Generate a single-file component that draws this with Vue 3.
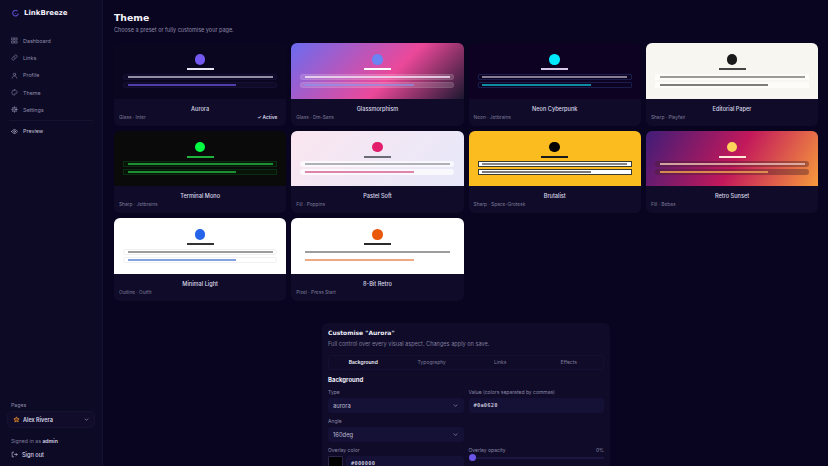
<template>
  <div class="layout">
    <aside class="sidebar">
      <div class="brand">
        <svg class="brand-icon" viewBox="0 0 10 10" width="7" height="7">
          <path d="M7.8 1.6A4 4 0 1 0 9 5" fill="none" stroke="#5a4fd0" stroke-width="1.5" />
          <circle cx="5" cy="5" r="1.1" fill="#2f2b78" />
        </svg>
        <span>LinkBreeze</span>
      </div>
      <nav class="nav">
        <a v-for="item in navItems" :key="item.label" class="nav-item">
          <svg viewBox="0 0 24 24" width="7" height="7" class="nav-icon" v-html="item.icon"></svg>
          <span>{{ item.label }}</span>
        </a>
      </nav>
      <div class="nav-divider"></div>
      <a class="nav-item preview">
        <svg viewBox="0 0 24 24" width="7" height="7" class="nav-icon">
          <path d="M2 12s4-7 10-7 10 7 10 7-4 7-10 7-10-7-10-7z" />
          <circle cx="12" cy="12" r="3" />
        </svg>
        <span>Preview</span>
      </a>
      <div class="side-bottom">
        <div class="pages-label">Pages</div>
        <div class="page-select">
          <svg viewBox="0 0 24 24" width="7" height="7" class="star">
            <path d="M12 3l2.8 5.8 6.2.9-4.5 4.4 1.1 6.3L12 17.4l-5.6 3 1.1-6.3L3 9.7l6.2-.9z" />
          </svg>
          <span class="page-name">Alex Rivera</span>
          <svg viewBox="0 0 24 24" width="7" height="7" class="chev"><path d="M6 9l6 6 6-6" /></svg>
        </div>
        <div class="signed">Signed in as <b>admin</b></div>
        <div class="signout">
          <svg viewBox="0 0 24 24" width="7" height="7" class="nav-icon">
            <path d="M9 4H4v16h5M12 12h9M17 8l4 4-4 4" />
          </svg>
          <span>Sign out</span>
        </div>
      </div>
    </aside>

    <main class="main">
      <h1 class="title">Theme</h1>
      <p class="subtitle">Choose a preset or fully customise your page.</p>

      <section class="grid">
        <article v-for="t in themes" :key="t.name" class="card">
          <div class="preview-box" :style="{ background: t.bg }">
            <span class="dot" :style="{ background: t.accent }"></span>
            <span class="name-bar" :style="{ background: t.text }"></span>
            <div class="link-row" :style="{ background: t.row, borderColor: t.rowBorder, borderRadius: t.radius }">
              <span class="bar" :style="{ background: t.bar1 }"></span>
            </div>
            <div class="link-row" :style="{ background: t.row, borderColor: t.rowBorder, borderRadius: t.radius }">
              <span class="bar short" :style="{ background: t.bar2 }"></span>
            </div>
          </div>
          <div class="card-body">
            <div class="card-name">{{ t.name }}</div>
            <div class="card-meta">
              <span>{{ t.meta }}</span>
              <span v-if="t.active" class="active">✓ Active</span>
            </div>
          </div>
        </article>
      </section>

      <section class="panel">
        <h2 class="panel-title">Customise "Aurora"</h2>
        <p class="panel-sub">Full control over every visual aspect. Changes apply on save.</p>
        <div class="tabs">
          <span v-for="(tab, i) in tabs" :key="tab" class="tab" :class="{ on: i === 0 }">{{ tab }}</span>
        </div>
        <h3 class="panel-head">Background</h3>
        <div class="fields">
          <div class="field">
            <label>Type</label>
            <div class="input">aurora<svg viewBox="0 0 24 24" width="7" height="7" class="chev"><path d="M6 9l6 6 6-6" /></svg></div>
          </div>
          <div class="field">
            <label>Value (colors separated by commas)</label>
            <div class="input mono">#0a0620</div>
          </div>
          <div class="field">
            <label>Angle</label>
            <div class="input">160deg<svg viewBox="0 0 24 24" width="7" height="7" class="chev"><path d="M6 9l6 6 6-6" /></svg></div>
          </div>
          <div class="field"></div>
          <div class="field">
            <label>Overlay color</label>
            <div class="color-row">
              <span class="swatch"></span>
              <div class="input mono grow">#000000</div>
            </div>
          </div>
          <div class="field">
            <label class="spread"><span>Overlay opacity</span><span>0%</span></label>
            <div class="slider"><span class="thumb"></span></div>
          </div>
        </div>
      </section>
    </main>
  </div>
</template>

<script setup>
const navItems = [
  { label: 'Dashboard', icon: '<rect x="3" y="3" width="7" height="7"/><rect x="14" y="3" width="7" height="7"/><rect x="3" y="14" width="7" height="7"/><rect x="14" y="14" width="7" height="7"/>' },
  { label: 'Links', icon: '<path d="M10 14a5 5 0 0 0 7 0l3-3a5 5 0 0 0-7-7l-1 1"/><path d="M14 10a5 5 0 0 0-7 0l-3 3a5 5 0 0 0 7 7l1-1"/>' },
  { label: 'Profile', icon: '<circle cx="12" cy="8" r="4"/><path d="M4 21c0-4 3-7 8-7s8 3 8 7"/>' },
  { label: 'Theme', icon: '<path d="M12 3a9 9 0 1 0 0 18c2 0 2-2 1-3s0-3 2-3h3a3 3 0 0 0 3-3c0-5-4-9-9-9z"/>' },
  { label: 'Settings', icon: '<circle cx="12" cy="12" r="3"/><circle cx="12" cy="12" r="7.5"/><path d="M12 2v3M12 19v3M2 12h3M19 12h3M5 5l2 2M17 17l2 2M19 5l-2 2M7 17l-2 2"/>' },
]

const tabs = ['Background', 'Typography', 'Links', 'Effects']

const themes = [
  { name: 'Aurora', meta: 'Glass · Inter', active: true, bg: '#0a0620', accent: '#7358f0', text: '#e8e6f4', row: '#0e0a28', rowBorder: '#131033', radius: '1.5px', bar1: '#a9a6b8', bar2: '#5a48c0' },
  { name: 'Glassmorphism', meta: 'Glass · Dm-Sans', bg: 'linear-gradient(135deg, #6a6cf0 0%, #ec4899 58%, #1b1830 100%)', accent: '#6a84f4', text: '#ffffff', row: 'rgba(255,255,255,.16)', rowBorder: 'rgba(255,255,255,.08)', radius: '3px', bar1: '#eedcf0', bar2: 'rgba(130,150,240,.75)' },
  { name: 'Neon Cyberpunk', meta: 'Neon · Jetbrains', bg: '#0d0221', accent: '#00eaff', text: '#d6c8e6', row: '#0d0221', rowBorder: '#1a1e4c', radius: '1px', bar1: '#9c93a8', bar2: '#0fa3b8' },
  { name: 'Editorial Paper', meta: 'Sharp · Playfair', bg: '#f8f6f1', accent: '#1a1a1a', text: '#444444', row: '#fdfcf9', rowBorder: 'transparent', radius: '0', bar1: '#8a8a86', bar2: '#666664' },
  { name: 'Terminal Mono', meta: 'Sharp · Jetbrains', bg: '#0a0a0a', accent: '#00ff41', text: '#1fb23d', row: '#071407', rowBorder: '#0a2c10', radius: '0', bar1: '#22a63c', bar2: '#22a63c' },
  { name: 'Pastel Soft', meta: 'Fill · Poppins', bg: 'linear-gradient(135deg, #fbe6f0 0%, #e6e8fa 100%)', accent: '#e11d6c', text: '#6a6a78', row: 'rgba(255,255,255,.7)', rowBorder: 'transparent', radius: '3px', bar1: '#a3a5ab', bar2: '#d9709c' },
  { name: 'Brutalist', meta: 'Sharp · Space-Grotesk', bg: '#fbbc1f', accent: '#000000', text: '#1a1a1a', row: '#ffffff', rowBorder: '#3a3a30', radius: '0', bar1: '#707070', bar2: '#606060' },
  { name: 'Retro Sunset', meta: 'Fill · Bebas', bg: 'linear-gradient(120deg, #3f1d78 0%, #c2185b 52%, #f79b3c 100%)', accent: '#ffd35c', text: '#ffe8d8', row: 'rgba(70,30,40,.4)', rowBorder: 'transparent', radius: '3px', bar1: '#e8b8b0', bar2: '#eb9a50' },
  { name: 'Minimal Light', meta: 'Outline · Outfit', bg: '#ffffff', accent: '#2563eb', text: '#333333', row: '#ffffff', rowBorder: '#f0f0f0', radius: '3px', bar1: '#8c8c8c', bar2: '#6f90dc' },
  { name: '8-Bit Retro', meta: 'Pixel · Press Start', bg: '#ffffff', accent: '#ea580c', text: '#2a2a2a', row: '#ffffff', rowBorder: 'transparent', radius: '0', bar1: '#8c8c8c', bar2: '#ec9a6c' },
]
</script>

<style>
html, body {
  margin: 0;
  height: 466px;
  overflow: hidden;
  background: #090520;
}
</style>

<style scoped>
.layout {
  display: flex;
  width: 828px;
  height: 466px;
  overflow: hidden;
  font-family: Inter, "Liberation Sans", sans-serif;
  color: #e8e6f4;
  background: #090520;
}

.sidebar {
  flex: 0 0 103px;
  box-sizing: border-box;
  display: flex;
  flex-direction: column;
  padding: 0 7px;
  background: #0d0a26;
  border-right: 1px solid #15112f;
}

.brand {
  display: flex;
  align-items: center;
  gap: 5px;
  height: 26px;
  padding-left: 5px;
  font-family: "DejaVu Sans", sans-serif;
  font-size: 7px;
  font-weight: 700;
  color: #f2f0fa;
}

.nav {
  display: flex;
  flex-direction: column;
  margin-top: 6px;
}

.nav-item {
  display: flex;
  align-items: center;
  gap: 5px;
  height: 17.3px;
  padding-left: 4px;
  font-size: 5.4px;
  color: #8d8aa8;
}

.nav-icon {
  flex-shrink: 0;
  fill: none;
  stroke: currentColor;
  stroke-width: 2;
  stroke-linecap: round;
  stroke-linejoin: round;
}

.nav-divider {
  height: 1px;
  margin: 2px 2px 1px;
  background: #16122f;
}

.preview {
  color: #c4c2d8;
}

.side-bottom {
  margin-top: auto;
  padding-bottom: 8px;
}

.pages-label {
  font-size: 5.2px;
  color: #8d8aa8;
  margin: 0 0 3px 4px;
}

.page-select {
  display: flex;
  align-items: center;
  gap: 3px;
  box-sizing: border-box;
  height: 17px;
  padding: 0 4px 0 5px;
  border: 1px solid #16122f;
  border-radius: 5px;
  background: #100c2a;
}

.star {
  fill: #5a3320;
  stroke: #d9822b;
  stroke-width: 3;
}

.page-name {
  flex: 1;
  font-size: 5.5px;
  font-weight: 600;
  color: #d8d6e8;
}

.chev {
  fill: none;
  stroke: #8d8aa8;
  stroke-width: 2.5;
}

.signed {
  margin: 10px 0 0 4px;
  font-size: 5.2px;
  color: #7f7c9a;
}

.signed b {
  color: #d8d6e8;
  font-weight: 600;
}

.signout {
  display: flex;
  align-items: center;
  gap: 4px;
  margin: 7px 0 0 4px;
  font-size: 5.6px;
  font-weight: 500;
  color: #d8d6e8;
}

.main {
  flex: 1;
  min-width: 0;
  padding: 0 10px 0 11px;
}

.title {
  margin: 11px 0 0;
  font-family: "DejaVu Sans", sans-serif;
  font-size: 9.3px;
  line-height: 13px;
  font-weight: 700;
  color: #f5f4fb;
}

.subtitle {
  margin: 2px 0 0;
  font-size: 5.5px;
  line-height: 8px;
  color: #8d8aa8;
}

.grid {
  display: grid;
  grid-template-columns: repeat(4, 172.3px);
  grid-auto-rows: 82.5px;
  column-gap: 5px;
  row-gap: 5px;
  margin-top: 9px;
}

.card {
  display: flex;
  flex-direction: column;
  border-radius: 6px;
  overflow: hidden;
  background: #0f0b29;
}

.preview-box {
  flex: 0 0 55.5px;
  display: flex;
  flex-direction: column;
  align-items: center;
  box-sizing: border-box;
  padding-top: 11px;
}

.dot {
  width: 10.5px;
  height: 10.5px;
  border-radius: 50%;
}

.name-bar {
  width: 27px;
  height: 2px;
  margin: 3.5px 0 3.5px;
}

.link-row {
  box-sizing: border-box;
  width: 154px;
  height: 6px;
  margin-bottom: 2px;
  padding: 0 3.5px;
  display: flex;
  align-items: center;
  border: 0.5px solid transparent;
}

.bar {
  display: block;
  width: 100%;
  height: 2px;
  opacity: 0.85;
}

.bar.short {
  width: 75%;
}

.card-body {
  flex: 1;
  padding: 6px 5px 0;
}

.card-name {
  text-align: center;
  font-size: 5.6px;
  line-height: 8px;
  font-weight: 500;
  color: #dcdaea;
}

.card-meta {
  display: flex;
  justify-content: space-between;
  margin-top: 1px;
  font-size: 4.8px;
  line-height: 7px;
  color: #7f7c9a;
}

.active {
  margin-right: 4px;
  color: #dcdaea;
  font-weight: 600;
}

.panel {
  box-sizing: border-box;
  width: 288px;
  height: 160px;
  margin: 22px 0 0 208px;
  padding: 6px 6px;
  background: #0f0b29;
  border-radius: 6px;
}

.panel-title {
  margin: 0;
  font-family: "DejaVu Sans", sans-serif;
  font-size: 6px;
  line-height: 8px;
  font-weight: 700;
  color: #ecebf6;
}

.panel-sub {
  margin: 3px 0 0;
  font-size: 5.6px;
  line-height: 8px;
  color: #7f7c9a;
}

.tabs {
  display: grid;
  grid-template-columns: repeat(4, 1fr);
  margin-top: 7px;
  height: 15px;
  align-items: center;
  border: 1px solid #141033;
  border-radius: 3px;
  box-sizing: border-box;
}

.tab {
  text-align: center;
  font-size: 5px;
  color: #7f7c9a;
}

.tab.on {
  color: #ecebf6;
  font-weight: 600;
}

.panel-head {
  margin: 6px 0 0;
  font-size: 6px;
  line-height: 8px;
  font-weight: 700;
  color: #ecebf6;
}

.fields {
  display: grid;
  grid-template-columns: 1fr 1fr;
  column-gap: 5px;
  row-gap: 4px;
  margin-top: 5px;
}

.field {
  min-height: 25px;
}

.field label {
  display: block;
  font-size: 5px;
  line-height: 7px;
  margin-bottom: 2px;
  color: #8d8aa8;
}

.spread {
  display: flex !important;
  justify-content: space-between;
}

.input {
  display: flex;
  align-items: center;
  justify-content: space-between;
  box-sizing: border-box;
  height: 15px;
  padding: 0 5px;
  font-size: 5.8px;
  color: #bfbdd2;
  background: #151136;
  border-radius: 3px;
}

.mono {
  font-family: "DejaVu Sans Mono", monospace;
  font-size: 5.4px;
  font-weight: 700;
  letter-spacing: 0.2px;
}

.color-row {
  display: flex;
  gap: 3px;
}

.swatch {
  flex: 0 0 13px;
  height: 13px;
  border: 1px solid #2a2650;
  background: #000;
  border-radius: 1px;
}

.grow {
  flex: 1;
}

.slider {
  position: relative;
  height: 2px;
  margin-top: 3px;
  background: #1a1640;
  border-radius: 1px;
}

.thumb {
  position: absolute;
  left: 0;
  top: -2.5px;
  width: 7px;
  height: 7px;
  border-radius: 50%;
  background: #6a55e8;
}
</style>
